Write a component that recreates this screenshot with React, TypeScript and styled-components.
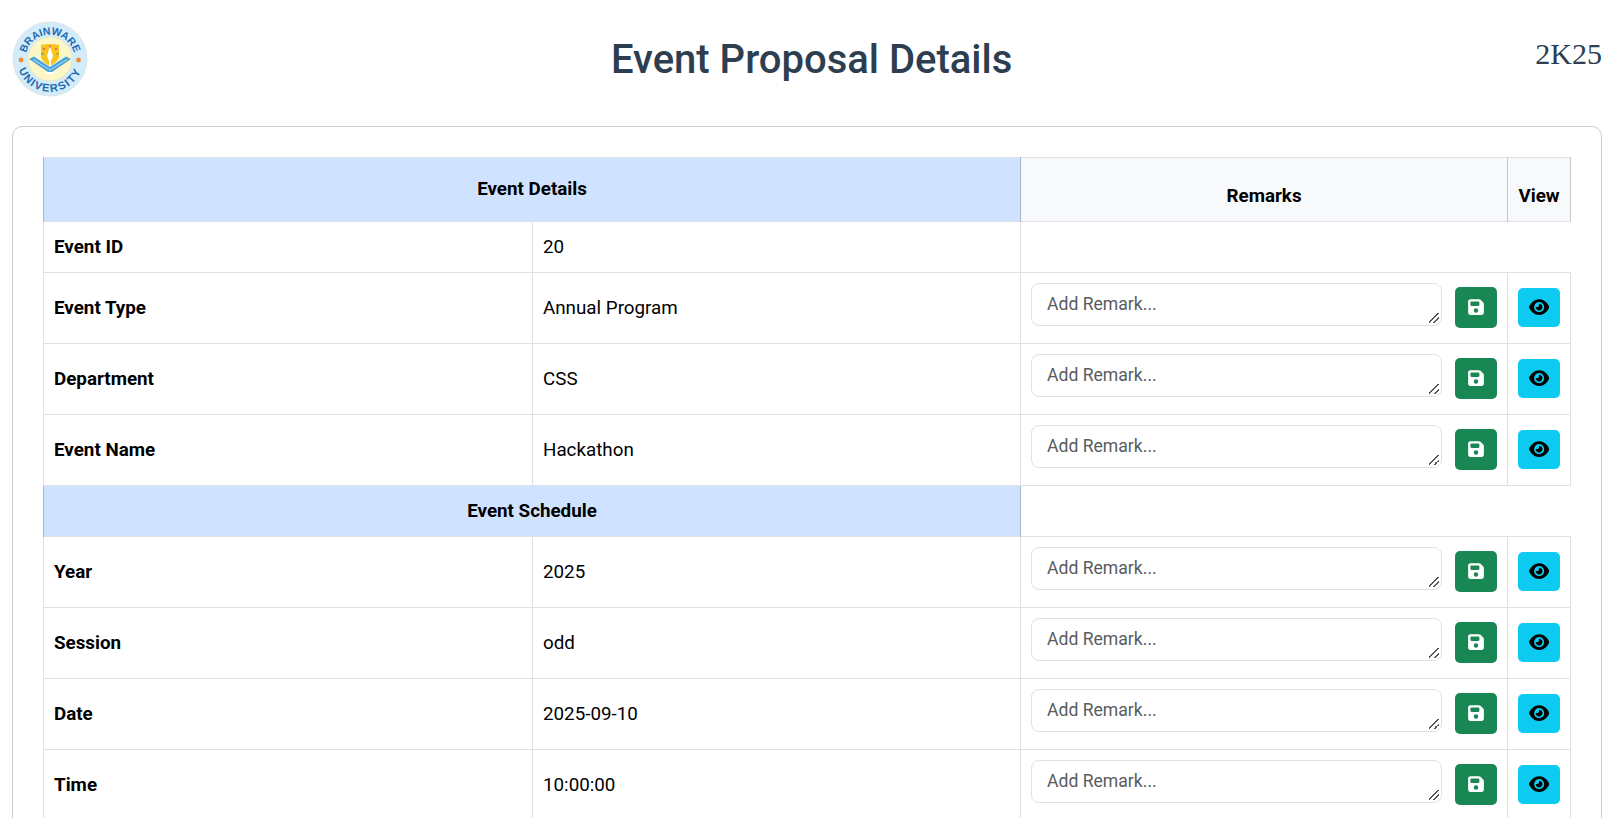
import React from "react";
import styled, { createGlobalStyle } from "styled-components";
import { FaEye, FaFloppyDisk } from "react-icons/fa6";

const Global = createGlobalStyle`
  html, body { margin: 0; padding: 0; height: 100%; overflow: hidden; background: #fff; }
  body { font-family: Roboto, "Liberation Sans", sans-serif; font-size: 18.8px; color: #000; }
  * { box-sizing: border-box; }
`;

const Page = styled.div`
  padding: 21px 1px 0 12px;
  width: 1603px;
`;

const Header = styled.header`
  display: flex;
  align-items: flex-start;
  justify-content: space-between;
  height: 105px;
`;

const LogoMark = styled.svg`
  width: 76px;
  height: 76px;
  flex: none;
  display: block;
`;

const Title = styled.h1`
  flex: 1;
  margin: 15px 0 0;
  text-align: center;
  font-size: 40px;
  line-height: 48px;
  font-weight: 500;
  color: #2c3e50;
`;

const Badge = styled.div`
  flex: none;
  margin-top: 16px;
  font-family: "Liberation Serif", "Times New Roman", serif;
  font-size: 30px;
  line-height: 34px;
  color: #2c3e50;
`;

const Card = styled.section`
  border: 1px solid #ccc;
  border-radius: 10px 10px 0 0;
  padding: 30px 30px 0;
  height: 800px;
`;

const Table = styled.table`
  border-collapse: collapse;
  table-layout: fixed;
  width: 1527px;
  font-size: 18.8px;
`;

const Col = styled.col<{ $w: number }>`
  width: ${(p) => p.$w}px;
`;

const Row = styled.tr`
  border-top: 1px solid #dee2e6;
  border-bottom: 1px solid #dee2e6;
`;

const SectionCell = styled.th<{ $tall?: boolean }>`
  background: #cfe2ff;
  border-left: 1px solid #a6b5cc;
  border-right: 1px solid #a6b5cc;
  text-align: center;
  font-weight: 700;
  line-height: 24px;
  padding: ${(p) => (p.$tall ? "19px 10px 20px" : "13px 10px")};
  vertical-align: top;
`;

const LightHead = styled.th`
  background: #f8f9fa;
  border-left: 1px solid #c6c7c8;
  border-right: 1px solid #c6c7c8;
  text-align: center;
  font-weight: 700;
  line-height: 24px;
  padding: 26px 10px 13px;
  vertical-align: top;
`;

const Label = styled.td`
  border-left: 1px solid #dee2e6;
  border-right: 1px solid #dee2e6;
  padding: 12px 10px;
  line-height: 26px;
  font-weight: 700;
  vertical-align: middle;
`;

const Value = styled(Label)`
  font-weight: 400;
`;

const ActionCell = styled(Label)`
  font-weight: 400;
  padding: 10px 10px 12px;
`;

const RemarkForm = styled.div`
  display: flex;
  align-items: center;
  gap: 13px;
`;

const RemarkInput = styled.textarea`
  flex: 1;
  min-width: 0;
  height: 43px;
  display: block;
  margin-bottom: 5px;
  padding: 8px 15px;
  border: 1px solid #dee2e6;
  border-radius: 8px;
  font: 400 17.6px/24px Roboto, sans-serif;
  color: #212529;
  outline: none;
  &::placeholder { color: #595c5f; opacity: 1; }
  &::-webkit-resizer {
    background: linear-gradient(135deg, transparent 0 44%, #555 44% 54%, transparent 54% 70%, #555 70% 80%, transparent 80%)
      no-repeat right 2px bottom 2px / 10px 10px;
  }
`;

const IconButton = styled.button<{ $bg: string; $fg: string; $h: number }>`
  flex: none;
  width: 42px;
  height: ${(p) => p.$h}px;
  padding: 0;
  border: 0;
  border-radius: 5px;
  background: ${(p) => p.$bg};
  color: ${(p) => p.$fg};
  display: flex;
  align-items: center;
  justify-content: center;
`;

const Logo = () => (
  <LogoMark viewBox="0 0 76 76" role="img" aria-label="Brainware University">
    <defs>
      <path id="arcTop" d="M 13.6 43 A 24.8 24.8 0 1 1 62.4 43" />
      <path id="arcBot" d="M 5 34 A 33.2 33.2 0 1 0 71 34" />
    </defs>
    <circle cx="38" cy="38" r="37" fill="#d3ecfa" stroke="#dfe3e8" strokeWidth="1" />
    <circle cx="38" cy="38" r="22" fill="#fdf6c6" stroke="#e9e6b8" strokeWidth="0.8" />
    <text fontFamily="Liberation Sans, sans-serif" fontSize="10.5" fontWeight="700" fill="#1f6ab0">
      <textPath href="#arcTop" startOffset="50%" textAnchor="middle">BRAINWARE</textPath>
    </text>
    <text fontFamily="Liberation Sans, sans-serif" fontSize="11" fontWeight="700" fill="#1f6ab0" letterSpacing="1.5">
      <textPath href="#arcBot" startOffset="50%" textAnchor="middle">UNIVERSITY</textPath>
    </text>
    <path d="M29 24 Q38 22 47 24 L47 36 Q46 41 38 45 Q30 41 29 36 Z" fill="#f9c31f" />
    <path d="M38 25 L41 35 L39 40 L39 45 L37 45 L37 40 L35 35 Z" fill="#fff" />
    <path d="M17 38 L22 35.5 L38 46 L54 35.5 L59 38 L40 51 L36 51 Z" fill="#4aa5dc" />
    <path d="M21 38.5 L38 49 L55 38.5" fill="none" stroke="#d3ecfa" strokeWidth="0.8" />
    <path d="M34 51 L42 51 L43 53 L33 53 Z" fill="#fff" />
    <circle cx="32" cy="28" r="1" fill="#e8555f" />
    <circle cx="38" cy="25.5" r="1" fill="#d94fa0" />
    <circle cx="44" cy="28" r="1" fill="#e8555f" />
    <circle cx="30.5" cy="33" r="1" fill="#3fae6d" />
    <circle cx="45.5" cy="33" r="1" fill="#3fae6d" />
    <circle cx="9" cy="39" r="2.4" fill="#f08a35" />
    <circle cx="66.5" cy="39" r="2.4" fill="#f08a35" />
  </LogoMark>
);

const Actions = () => (
  <>
    <ActionCell>
      <RemarkForm>
        <RemarkInput placeholder="Add Remark..." />
        <IconButton $bg="#198754" $fg="#fff" $h={41} aria-label="Save"><FaFloppyDisk size={18} /></IconButton>
      </RemarkForm>
    </ActionCell>
    <ActionCell>
      <IconButton $bg="#0dcaf0" $fg="#000" $h={39} aria-label="View"><FaEye size={20.25} /></IconButton>
    </ActionCell>
  </>
);

const firstRows = [
  ["Event Type", "Annual Program"],
  ["Department", "CSS"],
  ["Event Name", "Hackathon"],
];
const scheduleRows = [
  ["Year", "2025"],
  ["Session", "odd"],
  ["Date", "2025-09-10"],
  ["Time", "10:00:00"],
];

export default function App() {
  return (
    <Page>
      <Global />
      <Header>
        <Logo />
        <Title>Event Proposal Details</Title>
        <Badge>2K25</Badge>
      </Header>
      <Card>
        <Table>
          <colgroup>
            <Col $w={489} />
            <Col $w={488} />
            <Col $w={487} />
            <Col $w={63} />
          </colgroup>
          <thead>
            <Row>
              <SectionCell colSpan={2} $tall>Event Details</SectionCell>
              <LightHead>Remarks</LightHead>
              <LightHead>View</LightHead>
            </Row>
          </thead>
          <tbody>
            <Row>
              <Label>Event ID</Label>
              <Value>20</Value>
            </Row>
            {firstRows.map(([k, v]) => (
              <Row key={k}>
                <Label>{k}</Label>
                <Value>{v}</Value>
                <Actions />
              </Row>
            ))}
            <Row>
              <SectionCell colSpan={2}>Event Schedule</SectionCell>
            </Row>
            {scheduleRows.map(([k, v]) => (
              <Row key={k}>
                <Label>{k}</Label>
                <Value>{v}</Value>
                <Actions />
              </Row>
            ))}
          </tbody>
        </Table>
      </Card>
    </Page>
  );
}
